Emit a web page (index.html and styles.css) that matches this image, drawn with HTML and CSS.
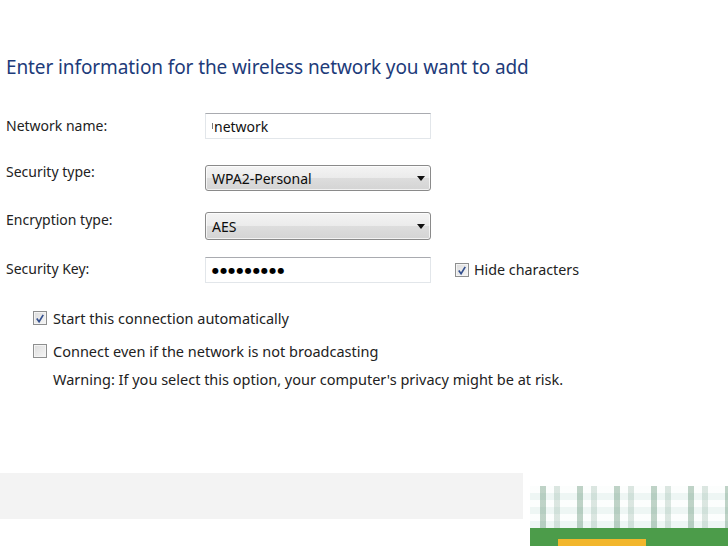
FILE: index.html
```html
<!DOCTYPE html>
<html>
<head>
<meta charset="utf-8">
<link rel="stylesheet" href="styles.css">
</head>
<body>
<div class="page">
  <h1 class="title">Enter information for the wireless network you want to add</h1>
  <div class="form">
    <div class="row r1">
      <label class="lbl">Network name:</label>
      <div class="field text"><span class="caret"></span>network</div>
    </div>
    <div class="row r2">
      <label class="lbl">Security type:</label>
      <div class="field select"><span>WPA2-Personal</span><span class="arrow"></span></div>
    </div>
    <div class="row r3">
      <label class="lbl">Encryption type:</label>
      <div class="field select tall"><span>AES</span><span class="arrow"></span></div>
    </div>
    <div class="row r4">
      <label class="lbl">Security Key:</label>
      <div class="field text"><span class="dots">●●●●●●●●●</span></div>
      <div class="check-line hide">
        <span class="cb checked"><svg viewBox="0 0 13 13" width="13" height="13"><path d="M3 6.5 L5.5 10 L10 2.5" fill="none" stroke="#34508f" stroke-width="1.8"/></svg></span>
        <span>Hide characters</span>
      </div>
    </div>
  </div>

  <div class="options">
    <div class="check-line">
      <span class="cb checked"><svg viewBox="0 0 13 13" width="13" height="13"><path d="M3 6.5 L5.5 10 L10 2.5" fill="none" stroke="#34508f" stroke-width="1.8"/></svg></span>
      <span>Start this connection automatically</span>
    </div>
    <div class="check-line">
      <span class="cb"></span>
      <span>Connect even if the network is not broadcasting</span>
    </div>
    <div class="warning">Warning: If you select this option, your computer's privacy might be at risk.</div>
  </div>

  <div class="footer-band"></div>
</div>
<div class="watermark">
  <div class="wm-pixels"></div>
  <div class="wm-bar"><span class="wm-yellow"></span></div>
</div>
</body>
</html>
```

FILE: styles.css
```css
html, body {
  margin: 0;
  padding: 0;
  background: #ffffff;
}
body {
  width: 728px;
  height: 546px;
  overflow: hidden;
  position: relative;
  font-family: "Noto Sans", "Open Sans", sans-serif;
  color: #1e1e1e;
}
.page {
  padding-top: 55px;
}
.title {
  margin: 0 0 0 6px;
  font-size: 19px;
  line-height: 24px;
  font-weight: normal;
  color: #1d3b7a;
  letter-spacing: -0.1px;
}
.form {
  margin-top: 34px;
  margin-left: 6px;
  display: flex;
  flex-direction: column;
}
.row {
  display: grid;
  grid-template-columns: 199px 226px auto;
  align-items: center;
}
.r2 { margin-top: 26px; }
.r3 { margin-top: 21px; }
.r4 { margin-top: 17px; }
.lbl {
  font-size: 14px;
  line-height: 20px;
  color: #222;
  align-self: start;
  margin-top: 3px;
}
.r2 .lbl { margin-top: -3px; }
.r3 .lbl { margin-top: -2px; }
.r4 .lbl { margin-top: 2px; }
.field {
  box-sizing: border-box;
  height: 26px;
  display: flex;
  align-items: center;
  padding-left: 6px;
  font-size: 14px;
  color: #111;
}
.field.tall {
  height: 28px;
}
.text {
  border: 1px solid #e2e6ea;
  border-top-color: #a9abb0;
  background: #fff;
}
.caret {
  width: 1px;
  height: 6px;
  background: #777;
  margin-right: 1px;
}
.select {
  border: 1px solid #8a8a8a;
  border-radius: 3px;
  background: linear-gradient(#f4f4f4, #ebebeb 50%, #dddddd 51%, #d4d4d4);
  justify-content: space-between;
  padding-right: 5px;
  box-shadow: inset 0 0 0 1px rgba(255,255,255,0.7);
  color: #0c0c0c;
}
.arrow {
  width: 0;
  height: 0;
  border-left: 4px solid transparent;
  border-right: 4px solid transparent;
  border-top: 5px solid #111;
}
.dots {
  font-family: "DejaVu Sans", sans-serif;
  font-size: 8px;
  letter-spacing: 1.2px;
  color: #000;
}
.check-line {
  display: flex;
  align-items: center;
  gap: 6px;
  font-size: 14.5px;
  line-height: 20px;
  color: #222;
}
.hide {
  margin-left: 24px;
  gap: 5px;
  font-size: 14.3px;
}
.cb {
  box-sizing: border-box;
  width: 14px;
  height: 14px;
  border: 1px solid #8e8f8f;
  background: linear-gradient(135deg, #dcdcdc, #f6f6f6);
  box-shadow: inset 0 0 0 1px #f4f4f4;
  display: flex;
  align-items: center;
  justify-content: center;
}
.cb svg {
  display: block;
}
.options {
  margin-top: 25px;
  margin-left: 33px;
  display: flex;
  flex-direction: column;
  gap: 13px;
}
.warning {
  margin-left: 20px;
  margin-top: -5px;
  font-size: 14.5px;
  line-height: 20px;
  color: #222;
}
.footer-band {
  margin-top: 84px;
  width: 523px;
  height: 46px;
  background: #f3f3f3;
}
.watermark {
  position: absolute;
  left: 530px;
  top: 486px;
  width: 198px;
  height: 60px;
}
.wm-pixels {
  height: 42px;
  background-color: #eef6f4;
  background-image:
    repeating-linear-gradient(90deg, transparent 0 10px, rgba(90,140,110,0.38) 10px 16px, transparent 16px 24px, rgba(120,160,140,0.25) 24px 30px, transparent 30px 37px),
    repeating-linear-gradient(0deg, transparent 0 7px, rgba(255,255,255,0.85) 7px 14px);
}
.wm-bar {
  height: 18px;
  background: #4c9c4a;
  position: relative;
}
.wm-yellow {
  position: absolute;
  left: 28px;
  bottom: 0;
  width: 88px;
  height: 7px;
  background: #f2b62c;
}
```
